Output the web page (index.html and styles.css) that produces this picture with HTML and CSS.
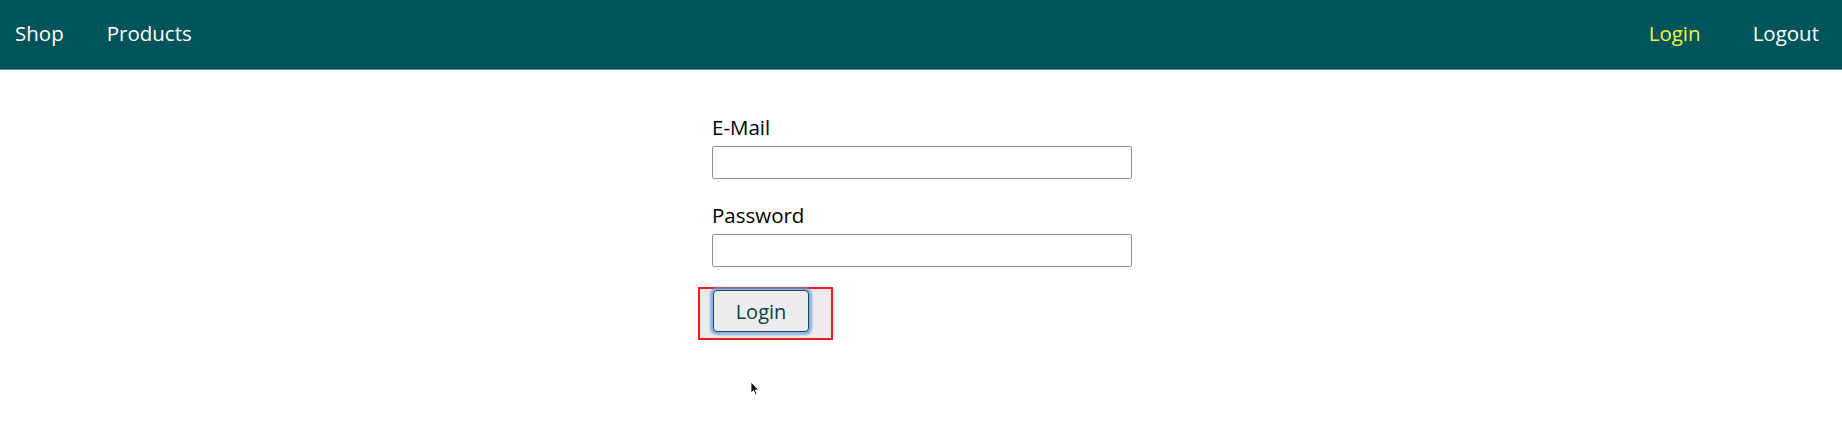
FILE: index.html
```html
<!DOCTYPE html>
<html>
<head>
<meta charset="utf-8">
<link rel="stylesheet" href="styles.css">
</head>
<body>
<header class="nav">
  <ul class="nav-left">
    <li><a class="nav-link" href="#">Shop</a></li>
    <li><a class="nav-link" href="#">Products</a></li>
  </ul>
  <ul class="nav-right">
    <li><a class="nav-link active" href="#">Login</a></li>
    <li><a class="nav-link" href="#">Logout</a></li>
  </ul>
</header>
<main class="main">
  <form class="form">
    <label class="label" for="email">E-Mail</label>
    <input class="input" id="email" type="email">
    <label class="label label-second" for="password">Password</label>
    <input class="input" id="password" type="password">
    <div class="highlight">
      <button class="btn" type="button">Login</button>
    </div>
  </form>
  <svg class="cursor" width="10" height="15" viewBox="0 0 10 15"><path d="M1 1 L1 12 L3.6 9.6 L5.4 13.6 L7 12.9 L5.3 9 L8.6 9 Z" fill="#111" stroke="#fff" stroke-width="0.8"/></svg>
</main>
</body>
</html>
```
FILE: styles.css
```css
html, body {
  margin: 0;
  padding: 0;
  background: #ffffff;
  font-family: "Open Sans", "Noto Sans", sans-serif;
}
.nav {
  height: 70px;
  background: #01545a;
  border-bottom: 1px solid #5c9597;
  display: flex;
  justify-content: space-between;
  align-items: center;
  padding: 0 23px 4px 15px;
  box-sizing: border-box;
}
.nav-left, .nav-right {
  list-style: none;
  margin: 0;
  padding: 0;
  display: flex;
  align-items: center;
}
.nav-left { gap: 43px; }
.nav-right { gap: 52px; }
.nav-link {
  color: #ffffff;
  text-decoration: none;
  font-size: 20.5px;
  font-weight: 500;
  line-height: 28px;
}
.nav-link.active { color: #f2f24a; }
.main {
  position: relative;
  height: 373px;
}
.form {
  width: 420px;
  margin: 0 auto;
  padding-top: 43px;
  transform: translateX(1px);
}
.label {
  display: block;
  font-size: 20.5px;
  line-height: 29px;
  color: #000;
  margin-bottom: 4px;
}
.label-second { margin-top: 22px; }
.input {
  display: block;
  box-sizing: border-box;
  width: 420px;
  height: 33px;
  border: 1.5px solid #929292;
  border-radius: 2px;
  margin: 0;
  padding: 0 6px;
  font: inherit;
  background: #fff;
}
.highlight {
  display: inline-block;
  margin-top: 20px;
  margin-left: -14px;
  border: 2px solid #f21b1b;
  background: #ebebeb;
  padding: 1px 22px 6px 13px;
}
.btn {
  display: block;
  box-sizing: border-box;
  width: 96px;
  height: 42px;
  font-family: "Open Sans", "Noto Sans", sans-serif;
  font-size: 20px;
  color: #0b3f45;
  background: #ececec;
  border: 1.5px solid #174a55;
  border-radius: 4px;
  box-shadow: 0 0 2px 3px rgba(96, 156, 228, 0.7);
  padding: 0;
}
.cursor {
  position: absolute;
  left: 750px;
  top: 311px;
}
```
